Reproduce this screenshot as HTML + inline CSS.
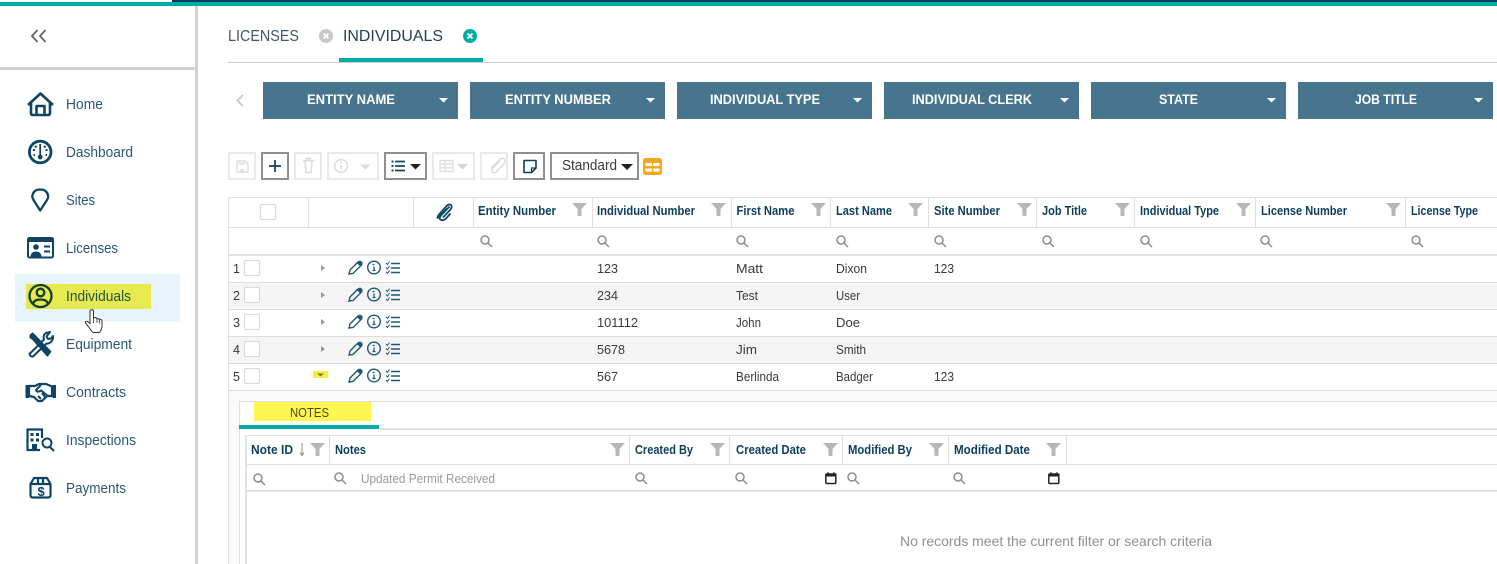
<!DOCTYPE html>
<html><head><meta charset="utf-8"><title>Individuals</title>
<style>
html,body{margin:0;padding:0;background:#fff;width:1497px;height:564px;overflow:hidden}
svg{display:block}
text{font-family:"Liberation Sans",sans-serif}
.nav{font-size:14.5px;fill:#2b5673}
.btn{font-size:13.5px;fill:#fff;font-weight:bold}
.th{font-size:12.5px;font-weight:bold;fill:#0f3d5e}
.td{font-size:12.5px;fill:#3a3a3a}
.tab{font-size:16px;fill:#3d5870}
.ln{fill:#e0e0e0}
</style></head><body>
<svg width="1497" height="564" viewBox="0 0 1497 564" xmlns="http://www.w3.org/2000/svg">
<defs>
<g id="fl"><path d="M0 0H15L9.5 6V13H5.5V6Z" fill="#b5b8ba"/></g>
<g id="sr" fill="none" stroke="#8c8c8c" stroke-width="1.5"><circle cx="5" cy="5" r="4"/><path d="M8 8L12 12"/></g>
<g id="cb"><rect x=".5" y=".5" width="15" height="15" rx="1.5" fill="#fff" stroke="#d8d8d8"/></g>
<g id="rowic" fill="none" stroke="#1f5877">
<path d="M1 13.5L2 9.5L10 1.5Q12 .5 13.5 2Q14.5 4 13 5L5 13Z" stroke-width="1.4"/><path d="M9.5 2.5L12.5 5.5L13.5 4L14 2L12 .5Z" fill="#1f5877"/>
<circle cx="26" cy="7" r="6.3" stroke-width="1.4"/><path d="M24.5 4H26.500M26 6V10M24.500 10H27.500" stroke-width="1.3"/>
<path d="M38 2.500L39.500 4L41.500 1M38 7L39.500 8.500L41.500 5.500M38 11.500L39.500 13L41.500 10" stroke-width="1"/><path d="M43 3H52M43 7.500H52M43 12H52" stroke-width="1.500"/>
</g>
<g id="tri"><path d="M0 0H9L4.500 4.500Z" fill="#fff"/></g>
<g id="cal"><rect x=".8" y="2" width="10" height="9.500" rx="1" fill="#fff" stroke="#222" stroke-width="1.500"/><rect x=".5" y="1.500" width="11" height="3" fill="#222"/><path d="M3 0V2M9 0V2" stroke="#222"/></g>
</defs>

<rect width="1497" height="564" fill="#fff"/>
<!-- top bar -->
<rect x="0" y="2" width="1497" height="4" fill="#00ada4"/>
<rect x="172" y="0" width="1325" height="2" fill="#07405f"/>
<!-- sidebar -->
<rect x="195" y="6" width="3" height="558" fill="#d2d2d2"/>
<rect x="0" y="67" width="195" height="3" fill="#d2d2d2"/>
<path d="M37.500 30L32 36L37.500 42M45.500 30L40 36L45.500 42" fill="none" stroke="#666" stroke-width="1.800"/>

<rect x="15" y="274" width="165" height="48" fill="#e8f4fc"/>
<rect x="26" y="284" width="125" height="25" fill="#e4ea50"/>

<!-- home -->
<g fill="none" stroke="#0c4566" stroke-width="2.600" stroke-linejoin="round">
<path d="M28 105L40.500 93.500L53 105"/><path d="M31 103V113Q31 115 33 115H48Q50 115 50 113V103"/><path d="M36.500 115V106H44.500V115"/>
</g>
<!-- dashboard -->
<g fill="none" stroke="#0c4566">
<circle cx="40.200" cy="152" r="10.800" stroke-width="2.800"/>
<path d="M40.200 144V156" stroke-width="1.800"/><circle cx="40.200" cy="157" r="2.400" fill="#0c4566" stroke="none"/>
<path d="M33 150h2M45.500 150h2M35 146l1.500 1.500M45.500 146l-1.500 1.500M33.500 155h1.500M45.500 155h1.500" stroke-width="2"/>
</g>
<!-- pin -->
<path d="M40.200 210.500L33.500 200Q31.800 197 32.500 195Q34 189.500 40.200 189.500Q46.500 189.500 48 195Q48.600 197 47 200Z" fill="none" stroke="#0c4566" stroke-width="2.300" stroke-linejoin="round"/>
<!-- license -->
<rect x="27" y="237" width="27" height="21.500" rx="2.500" fill="#0c4566"/>
<rect x="29" y="242" width="23" height="14.500" fill="#fff"/>
<circle cx="36" cy="247" r="2.800" fill="#0c4566"/><path d="M30.500 256.500Q31 251.500 36 251.500Q41 251.500 41.500 256.500Z" fill="#0c4566"/>
<path d="M44 246.500H50M44 251.500H50" stroke="#0c4566" stroke-width="2"/>
<!-- individual -->
<g fill="none" stroke="#113f2b" stroke-width="2.300">
<circle cx="40.500" cy="296" r="11"/><circle cx="40.500" cy="292.500" r="3.800"/><path d="M33 304Q34 299.500 40.500 299.500Q47 299.500 48 304"/>
</g>
<!-- equipment -->
<g>
<path d="M29.500 335L32.500 332.500L35 334.500L51.500 351.500L48 356.500L46.500 356L32.500 340L29.500 338Z" fill="#0c4566"/>
<path d="M30 353.500L44 339.500Q42.500 335 46 333L50 332L46.500 336.500L48 339L51 338.500L53 336Q53.500 341 49.500 343Q47.500 344 46.500 343.500L33 356.500Q30 357 29.500 353.500Z" fill="#fff" stroke="#0c4566" stroke-width="2" stroke-linejoin="round"/>
<path d="M29.500 335L32.500 332.500L50.500 350.500L47.500 356.500L36 344" fill="#0c4566"/>
</g>
<!-- handshake -->
<g>
<rect x="25.500" y="385" width="3.500" height="13" fill="#0c4566"/><rect x="52.500" y="385" width="3.500" height="13" fill="#0c4566"/>
<path d="M29 386L35 386L39 384L46 384L52 386.500V396L47 396L42 401L38 401L34 397L29 396Z" fill="#fff" stroke="#0c4566" stroke-width="2.200" stroke-linejoin="round"/>
<path d="M41 385L36 390Q37 393 41 390.500L48 396M38 396L41 399M42 393L45 397" fill="none" stroke="#0c4566" stroke-width="2"/>
</g>
<!-- inspections -->
<g>
<path d="M27.500 449V429.500H42V438" fill="none" stroke="#0c4566" stroke-width="2.200"/>
<path d="M26.500 450H40" stroke="#0c4566" stroke-width="2.200"/>
<rect x="30.500" y="433" width="3" height="3" fill="#0c4566"/><rect x="36" y="433" width="3" height="3" fill="#0c4566"/><rect x="30.500" y="438.500" width="3" height="3" fill="#0c4566"/><rect x="36" y="438.500" width="3" height="3" fill="#0c4566"/><rect x="32" y="444" width="5" height="6" fill="#0c4566"/>
<circle cx="47" cy="443" r="4.500" fill="none" stroke="#0c4566" stroke-width="2"/><path d="M50 447L54 451" stroke="#0c4566" stroke-width="2"/>
</g>
<!-- payments -->
<g fill="none" stroke="#0c4566" stroke-width="2.200" stroke-linejoin="round">
<path d="M34 478H47L50.500 484V495Q50.500 497.500 48 497.500H33Q30.500 497.500 30.500 495V484Z"/><path d="M30.500 484H50.500M38 478V484M43 478V484"/>
</g>
<text x="37.500" y="496" font-size="13" font-weight="bold" fill="#0c4566">$</text>

<text class="nav" x="66" y="109" textLength="37" lengthAdjust="spacingAndGlyphs">Home</text>
<text class="nav" x="66" y="157" textLength="67" lengthAdjust="spacingAndGlyphs">Dashboard</text>
<text class="nav" x="66" y="205" textLength="29" lengthAdjust="spacingAndGlyphs">Sites</text>
<text class="nav" x="66" y="253" textLength="52" lengthAdjust="spacingAndGlyphs">Licenses</text>
<text class="nav" x="66" y="301" textLength="65" lengthAdjust="spacingAndGlyphs" style="fill:#29503f">Individuals</text>
<text class="nav" x="66" y="349" textLength="66" lengthAdjust="spacingAndGlyphs">Equipment</text>
<text class="nav" x="66" y="397" textLength="60" lengthAdjust="spacingAndGlyphs">Contracts</text>
<text class="nav" x="66" y="445" textLength="70" lengthAdjust="spacingAndGlyphs">Inspections</text>
<text class="nav" x="66" y="493" textLength="60" lengthAdjust="spacingAndGlyphs">Payments</text>

<!-- hand cursor -->
<path d="M91 310Q93 309 93.500 311V318L95 317.500Q96.500 317.500 97 319Q98.500 318 99.500 319.500Q101.500 319 102 321V327Q101.500 330 99.500 332.500H93Q91 331 89.500 328L85.500 323Q85 321 87.500 321.500L90 323.500V311Q90 310 91 310Z" fill="#fff" stroke="#333" stroke-width="1"/>
<path d="M93.500 318V323M97 319V323M99.500 320V323.500" stroke="#333" stroke-width=".8" fill="none"/>

<!-- tabs -->
<rect x="228" y="62" width="1269" height="1" fill="#cfcfcf"/>
<rect x="339" y="58" width="144" height="4" fill="#00ada4"/>
<text class="tab" x="228" y="41" textLength="71" lengthAdjust="spacingAndGlyphs">LICENSES</text>
<text class="tab" x="343" y="41" textLength="100" lengthAdjust="spacingAndGlyphs" style="fill:#24405a">INDIVIDUALS</text>
<circle cx="326" cy="36" r="7" fill="#c9c9c9"/><path d="M323.500 33.500L328.500 38.500M328.500 33.500L323.500 38.500" stroke="#fff" stroke-width="1.800"/>
<circle cx="470" cy="36" r="7" fill="#00ada4"/><path d="M467.500 33.500L472.500 38.500M472.500 33.500L467.500 38.500" stroke="#fff" stroke-width="1.800"/>

<!-- filter buttons -->
<path d="M243 95L237.500 100.500L243 106" fill="none" stroke="#bccbd6" stroke-width="1.800"/>
<g fill="#46758d">
<rect x="263" y="82" width="195" height="37"/><rect x="470" y="82" width="195" height="37"/><rect x="677" y="82" width="195" height="37"/><rect x="884" y="82" width="195" height="37"/><rect x="1091" y="82" width="195" height="37"/><rect x="1298" y="82" width="195" height="37"/>
</g>
<text class="btn" x="307" y="104" textLength="88" lengthAdjust="spacingAndGlyphs">ENTITY NAME</text>
<text class="btn" x="505" y="104" textLength="106" lengthAdjust="spacingAndGlyphs">ENTITY NUMBER</text>
<text class="btn" x="710" y="104" textLength="110" lengthAdjust="spacingAndGlyphs">INDIVIDUAL TYPE</text>
<text class="btn" x="912" y="104" textLength="120" lengthAdjust="spacingAndGlyphs">INDIVIDUAL CLERK</text>
<text class="btn" x="1159" y="104" textLength="39" lengthAdjust="spacingAndGlyphs">STATE</text>
<text class="btn" x="1355" y="104" textLength="62" lengthAdjust="spacingAndGlyphs">JOB TITLE</text>
<use href="#tri" x="439" y="98"/><use href="#tri" x="646" y="98"/><use href="#tri" x="853" y="98"/><use href="#tri" x="1060" y="98"/><use href="#tri" x="1267" y="98"/><use href="#tri" x="1474" y="98"/>

<!-- toolbar -->
<g fill="#fff" stroke="#e9e9e9" stroke-width="2">
<rect x="229" y="153" width="26" height="26"/><rect x="295" y="153" width="26" height="26"/><rect x="328" y="153" width="50" height="26"/><rect x="433" y="153" width="41" height="26"/><rect x="481" y="153" width="26" height="26"/>
</g>
<g fill="#fff" stroke="#8f8f8f" stroke-width="2">
<rect x="262" y="153" width="26" height="26"/><rect x="385" y="153" width="41" height="26"/><rect x="514" y="153" width="30" height="26"/><rect x="551" y="153" width="87" height="26"/>
</g>
<!-- save -->
<path d="M237 161H245L248 164V172H237Z M240 161V164H244V161 M242 169.500a1.500 1.500 0 1 0 .1 0" fill="none" stroke="#dcdcdc" stroke-width="1.300"/>
<!-- plus -->
<path d="M275 160V172M269 166H281" stroke="#0f3d5e" stroke-width="1.700"/>
<!-- trash -->
<path d="M303 160.500H314M305 160.500L306 172.500H311L312 160.500M306.500 160.500V158.500H310.500V160.500" fill="none" stroke="#dcdcdc" stroke-width="1.500"/>
<!-- info -->
<circle cx="341" cy="166" r="6.300" fill="none" stroke="#dcdcdc" stroke-width="1.500"/><path d="M341 165V169.500M341 162V163.500" stroke="#dcdcdc" stroke-width="1.700"/>
<path d="M360 164.500H371L365.500 169.500Z" fill="#dcdcdc"/>
<!-- list -->
<path d="M395 161.500H405M395 166H405M395 170.500H405" stroke="#0f4a6b" stroke-width="1.700"/>
<rect x="391.500" y="160.500" width="2" height="2" fill="#0f4a6b"/><rect x="391.500" y="165" width="2" height="2" fill="#0f4a6b"/><rect x="391.500" y="169.500" width="2" height="2" fill="#0f4a6b"/>
<path d="M410 164H421L415.500 169.500Z" fill="#222"/>
<!-- table -->
<path d="M440 160.500H453V171.500H440ZM440 164H453M440 167.800H453M445 160.500V171.500" fill="none" stroke="#dcdcdc" stroke-width="1.200"/>
<path d="M457 164H468L462.500 169.500Z" fill="#d4d4d4"/>
<!-- clip small -->
<path d="M499 161L492 168.500Q489.500 171.500 492 173Q494 174 496 172L503 164Q505 161 503 159.500Q500.500 158 498 160.500L490 169" fill="none" stroke="#dcdcdc" stroke-width="1.400" transform="translate(1 -.5)"/>
<!-- note -->
<path d="M524 160.500H536V168L531.500 172.500H524Z" fill="none" stroke="#0f3d5e" stroke-width="1.600" stroke-linejoin="round"/><path d="M536 168H531.500V172.500" fill="none" stroke="#0f3d5e" stroke-width="1.200"/>
<text x="562" y="170" font-size="14.500" fill="#3a3a3a" textLength="55" lengthAdjust="spacingAndGlyphs">Standard</text>
<path d="M621 164H633L627 170Z" fill="#222"/>
<rect x="643" y="158" width="19" height="17" rx="2.500" fill="#f5a81c"/>
<rect x="645.500" y="163" width="6.300" height="3" fill="#fff"/><rect x="653.200" y="163" width="6.300" height="3" fill="#fff"/><rect x="645.500" y="168.500" width="6.300" height="3" fill="#fff"/><rect x="653.200" y="168.500" width="6.300" height="3" fill="#fff"/>

<!-- main grid -->
<rect x="228" y="197" width="1269" height="1" class="ln"/>
<rect x="228" y="227" width="1269" height="1" class="ln"/>
<rect x="228" y="254" width="1269" height="2" fill="#e2e2e2"/>
<rect x="228" y="197" width="1" height="367" class="ln"/>
<g class="ln">
<rect x="308" y="198" width="1" height="29"/><rect x="413" y="198" width="1" height="29"/><rect x="473" y="198" width="1" height="29"/><rect x="592" y="198" width="1" height="29"/><rect x="731" y="198" width="1" height="29"/><rect x="830" y="198" width="1" height="29"/><rect x="928" y="198" width="1" height="29"/><rect x="1036" y="198" width="1" height="29"/><rect x="1134" y="198" width="1" height="29"/><rect x="1255" y="198" width="1" height="29"/><rect x="1405" y="198" width="1" height="29"/>
</g>
<use href="#cb" x="260" y="204"/>
<path d="M449.500 206.500L441 215.500Q438.500 218.500 441 220Q443.500 221 446 218.500L450.500 213.500M447 208.500L439.500 216.500Q436 220 438.500 215L446.500 206Q449 203.500 451 205Q452.500 207 450.500 209.500L443 217.500" fill="none" stroke="#0f4a6b" stroke-width="1.800"/>

<text class="th" x="478" y="215" textLength="78" lengthAdjust="spacingAndGlyphs">Entity Number</text>
<text class="th" x="597" y="215" textLength="98" lengthAdjust="spacingAndGlyphs">Individual Number</text>
<text class="th" x="736.500" y="215" textLength="58" lengthAdjust="spacingAndGlyphs">First Name</text>
<text class="th" x="836" y="215" textLength="56" lengthAdjust="spacingAndGlyphs">Last Name</text>
<text class="th" x="934" y="215" textLength="66" lengthAdjust="spacingAndGlyphs">Site Number</text>
<text class="th" x="1042" y="215" textLength="45" lengthAdjust="spacingAndGlyphs">Job Title</text>
<text class="th" x="1140" y="215" textLength="79" lengthAdjust="spacingAndGlyphs">Individual Type</text>
<text class="th" x="1261" y="215" textLength="86" lengthAdjust="spacingAndGlyphs">License Number</text>
<text class="th" x="1411" y="215" textLength="67" lengthAdjust="spacingAndGlyphs">License Type</text>
<use href="#fl" x="572" y="203"/><use href="#fl" x="711" y="203"/><use href="#fl" x="811" y="203"/><use href="#fl" x="908" y="203"/><use href="#fl" x="1017" y="203"/><use href="#fl" x="1115" y="203"/><use href="#fl" x="1236" y="203"/><use href="#fl" x="1386" y="203"/>
<use href="#sr" x="480" y="235"/><use href="#sr" x="597" y="235"/><use href="#sr" x="736" y="235"/><use href="#sr" x="836" y="235"/><use href="#sr" x="934" y="235"/><use href="#sr" x="1042" y="235"/><use href="#sr" x="1140" y="235"/><use href="#sr" x="1260" y="235"/><use href="#sr" x="1411" y="235"/>

<!-- rows -->
<rect x="229" y="283" width="1268" height="26" fill="#f5f5f5"/>
<rect x="229" y="337" width="1268" height="26" fill="#f5f5f5"/>
<rect x="229" y="391" width="1268" height="173" fill="#fafafa"/>
<rect x="228" y="282" width="1269" height="1" fill="#dcdcdc"/><rect x="228" y="309" width="1269" height="1" fill="#dcdcdc"/><rect x="228" y="336" width="1269" height="1" fill="#dcdcdc"/><rect x="228" y="363" width="1269" height="1" fill="#dcdcdc"/><rect x="228" y="390" width="1269" height="1" fill="#dcdcdc"/>

<text class="td" x="233" y="273" textLength="7" lengthAdjust="spacingAndGlyphs">1</text>
<text class="td" x="233" y="300" textLength="7" lengthAdjust="spacingAndGlyphs">2</text>
<text class="td" x="233" y="327" textLength="7" lengthAdjust="spacingAndGlyphs">3</text>
<text class="td" x="233" y="354" textLength="7" lengthAdjust="spacingAndGlyphs">4</text>
<text class="td" x="233" y="381" textLength="7" lengthAdjust="spacingAndGlyphs">5</text>
<use href="#cb" x="244" y="260"/><use href="#cb" x="244" y="287"/><use href="#cb" x="244" y="314"/><use href="#cb" x="244" y="341"/><use href="#cb" x="244" y="368"/>
<g fill="#8d9aa5"><path d="M321 265L325 268L321 271Z"/><path d="M321 292L325 295L321 298Z"/><path d="M321 319L325 322L321 325Z"/><path d="M321 346L325 349L321 352Z"/></g>
<rect x="313" y="371" width="15" height="7" fill="#f7f03a"/><path d="M317 373.500H324L320.500 376.500Z" fill="#7a7a50"/>
<use href="#rowic" x="348" y="260.500"/><use href="#rowic" x="348" y="287.500"/><use href="#rowic" x="348" y="314.500"/><use href="#rowic" x="348" y="341.500"/><use href="#rowic" x="348" y="368.500"/>

<text class="td" x="597" y="273" textLength="21" lengthAdjust="spacingAndGlyphs">123</text>
<text class="td" x="736" y="273" textLength="27" lengthAdjust="spacingAndGlyphs">Matt</text>
<text class="td" x="836" y="273" textLength="31" lengthAdjust="spacingAndGlyphs">Dixon</text>
<text class="td" x="934" y="273" textLength="20" lengthAdjust="spacingAndGlyphs">123</text>
<text class="td" x="597" y="300" textLength="21" lengthAdjust="spacingAndGlyphs">234</text>
<text class="td" x="736" y="300" textLength="22" lengthAdjust="spacingAndGlyphs">Test</text>
<text class="td" x="836" y="300" textLength="24" lengthAdjust="spacingAndGlyphs">User</text>
<text class="td" x="597" y="327" textLength="41" lengthAdjust="spacingAndGlyphs">101112</text>
<text class="td" x="736" y="327" textLength="25" lengthAdjust="spacingAndGlyphs">John</text>
<text class="td" x="836" y="327" textLength="24" lengthAdjust="spacingAndGlyphs">Doe</text>
<text class="td" x="597" y="354" textLength="28" lengthAdjust="spacingAndGlyphs">5678</text>
<text class="td" x="736" y="354" textLength="21" lengthAdjust="spacingAndGlyphs">Jim</text>
<text class="td" x="836" y="354" textLength="30" lengthAdjust="spacingAndGlyphs">Smith</text>
<text class="td" x="597" y="381" textLength="21" lengthAdjust="spacingAndGlyphs">567</text>
<text class="td" x="736" y="381" textLength="43" lengthAdjust="spacingAndGlyphs">Berlinda</text>
<text class="td" x="836" y="381" textLength="37" lengthAdjust="spacingAndGlyphs">Badger</text>
<text class="td" x="934" y="381" textLength="20" lengthAdjust="spacingAndGlyphs">123</text>

<!-- nested panel -->
<rect x="239" y="401" width="1258" height="163" fill="#fff"/>
<rect x="239" y="401" width="1258" height="1" class="ln"/>
<rect x="239" y="401" width="1" height="163" class="ln"/>
<rect x="254" y="402" width="117" height="19" fill="#fff650"/>
<text x="290" y="417" font-size="12.500" fill="#4a4a20" textLength="39" lengthAdjust="spacingAndGlyphs">NOTES</text>
<rect x="379" y="428" width="1118" height="2" fill="#e0e0e0"/>
<rect x="239" y="425" width="140" height="4" fill="#00ada4"/>

<rect x="245" y="435" width="1252" height="1" class="ln"/>
<rect x="245" y="464" width="1252" height="1" class="ln"/>
<rect x="245" y="490" width="1252" height="2" fill="#e2e2e2"/>
<rect x="245" y="435" width="2" height="129" fill="#e2e2e2"/>
<g class="ln"><rect x="329" y="436" width="1" height="28"/><rect x="629" y="436" width="1" height="28"/><rect x="729" y="436" width="1" height="28"/><rect x="842" y="436" width="1" height="28"/><rect x="948" y="436" width="1" height="28"/><rect x="1066" y="436" width="1" height="28"/></g>

<text class="th" x="251" y="454" textLength="42" lengthAdjust="spacingAndGlyphs">Note ID</text>
<text class="th" x="335" y="454" textLength="31" lengthAdjust="spacingAndGlyphs">Notes</text>
<text class="th" x="635" y="454" textLength="58" lengthAdjust="spacingAndGlyphs">Created By</text>
<text class="th" x="736" y="454" textLength="70" lengthAdjust="spacingAndGlyphs">Created Date</text>
<text class="th" x="848" y="454" textLength="64" lengthAdjust="spacingAndGlyphs">Modified By</text>
<text class="th" x="954" y="454" textLength="76" lengthAdjust="spacingAndGlyphs">Modified Date</text>
<path d="M302 443V455M300 452.500L302 455.500L304 452.500" fill="none" stroke="#8a8a8a"/>
<use href="#fl" x="310" y="443"/><use href="#fl" x="610" y="443"/><use href="#fl" x="710" y="443"/><use href="#fl" x="823" y="443"/><use href="#fl" x="929" y="443"/><use href="#fl" x="1046" y="443"/>
<use href="#sr" x="253" y="473"/><use href="#sr" x="334" y="472"/><use href="#sr" x="635" y="472"/><use href="#sr" x="735" y="472"/><use href="#sr" x="847" y="472"/><use href="#sr" x="953" y="472"/>
<text x="361" y="483" font-size="12.500" fill="#9a9a9a" textLength="134" lengthAdjust="spacingAndGlyphs">Updated Permit Received</text>
<use href="#cal" x="825" y="472"/><use href="#cal" x="1048" y="472"/>

<text x="900" y="546" font-size="14" fill="#8f8f8f" textLength="312" lengthAdjust="spacingAndGlyphs">No records meet the current filter or search criteria</text>
</svg>
</body></html>
